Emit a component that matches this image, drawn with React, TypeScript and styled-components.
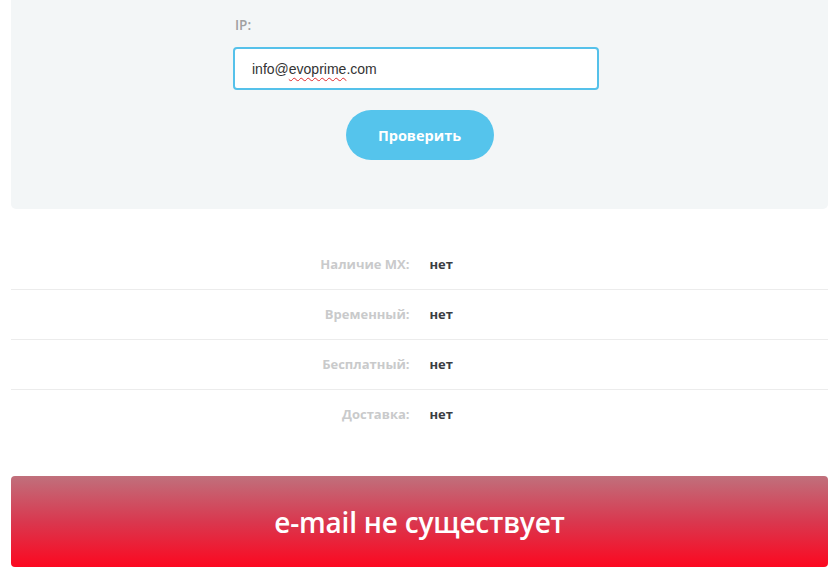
import React from "react";
import styled, { createGlobalStyle } from "styled-components";

const Global = createGlobalStyle`
  html, body { margin: 0; padding: 0; background: #ffffff; }
  body { font-family: "Open Sans", "Liberation Sans", Arial, sans-serif; overflow: hidden; }
  * { box-sizing: border-box; }
`;

const Page = styled.div`
  width: 837px;
  padding: 0 9px 0 11px;
  display: flex;
  flex-direction: column;
`;

const Panel = styled.section`
  margin-top: -10px;
  background: #f3f6f7;
  border-radius: 5px;
  padding: 27px 0 49px;
  display: flex;
  flex-direction: column;
`;

const Field = styled.div`
  margin-left: 222px;
  width: 366px;
  display: flex;
  flex-direction: column;
  gap: 14px;
`;

const Label = styled.label`
  font-family: "Open Sans", sans-serif;
  font-size: 13.5px;
  font-weight: 600;
  color: #a0a0a0;
  line-height: 16px;
  padding-left: 2px;
`;

const Input = styled.div`
  height: 43px;
  background: #ffffff;
  border: 2px solid #55c1ea;
  border-radius: 4px;
  padding: 0 17px;
  display: flex;
  align-items: center;
  font-family: "Liberation Sans", Arial, sans-serif;
  font-size: 14px;
  color: #333;
`;

const Misspelled = styled.span`
  text-decoration: underline wavy #e0292b;
  text-decoration-thickness: 1px;
  text-underline-offset: 3px;
`;

const Button = styled.button`
  align-self: center;
  margin-top: 20px;
  width: 148px;
  height: 50px;
  border: none;
  border-radius: 25px;
  background: #55c4ec;
  color: #ffffff;
  font-family: "Open Sans", sans-serif;
  font-weight: 700;
  font-size: 14.5px;
  cursor: pointer;
`;

const Results = styled.div`
  margin-top: 31px;
  display: flex;
  flex-direction: column;
`;

const Row = styled.div<{ $last?: boolean }>`
  height: 50px;
  display: grid;
  grid-template-columns: 1fr 1fr;
  align-items: center;
  padding-bottom: 2px;
  border-bottom: ${(p) => (p.$last ? "none" : "1px solid #ececec")};
`;

const Key = styled.span`
  text-align: right;
  padding-right: 10px;
  font-family: "Open Sans", sans-serif;
  font-weight: 700;
  font-size: 13px;
  color: #c9cacb;
`;

const Value = styled.span`
  padding-left: 10px;
  font-family: "Open Sans", sans-serif;
  font-weight: 700;
  font-size: 13px;
  color: #3a3d42;
`;

const Banner = styled.div`
  margin-top: 36px;
  height: 91px;
  border-radius: 4px;
  background: linear-gradient(to bottom, #c0707c 0%, #d9384f 50%, #fc0820 100%);
  display: flex;
  align-items: center;
  justify-content: center;
  color: #ffffff;
  font-family: "Open Sans", sans-serif;
  font-weight: 600;
  font-size: 28px;
  letter-spacing: -0.2px;
`;

const rows = [
  { k: "Наличие MX:", v: "нет" },
  { k: "Временный:", v: "нет" },
  { k: "Бесплатный:", v: "нет" },
  { k: "Доставка:", v: "нет" },
];

export default function App() {
  return (
    <>
      <Global />
      <Page>
        <Panel>
          <Field>
            <Label>IP:</Label>
            <Input>
              info@<Misspelled>evoprime</Misspelled>.com
            </Input>
          </Field>
          <Button>Проверить</Button>
        </Panel>
        <Results>
          {rows.map((r, i) => (
            <Row key={r.k} $last={i === rows.length - 1}>
              <Key>{r.k}</Key>
              <Value>{r.v}</Value>
            </Row>
          ))}
        </Results>
        <Banner>e-mail не существует</Banner>
      </Page>
    </>
  );
}
